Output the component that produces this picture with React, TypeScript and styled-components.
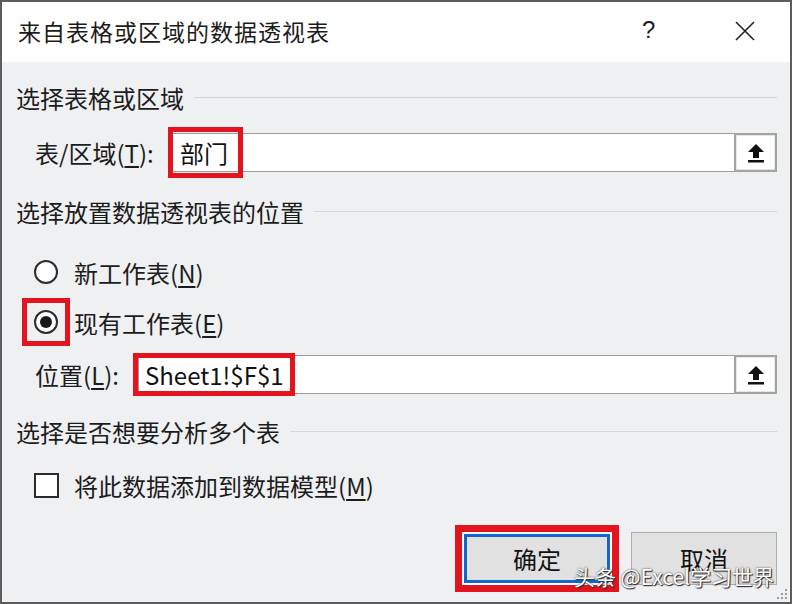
import styled, { createGlobalStyle } from "styled-components";

const GlobalStyle = createGlobalStyle`
  html, body {
    margin: 0;
    padding: 0;
    width: 792px;
    height: 604px;
    overflow: hidden;
    background: #eff0f2;
  }
  * {
    box-sizing: border-box;
  }
`

const Window = styled.div`
  position: relative;
  width: 792px;
  height: 604px;
  border: 2px solid #5c5c5c;
  background: #eff0f2;
  font-family: "Noto Sans CJK SC", "Microsoft YaHei", sans-serif;
  color: #1c1c1c;
  display: flex;
  flex-direction: column;
`

const TitleBar = styled.div`
  height: 60px;
  background: #ffffff;
  display: flex;
  align-items: center;
  padding: 0 0 0 16px;
`

const Title = styled.div`
  flex: 1;
  font-size: 23px;
  letter-spacing: 1px;
  margin-top: -2px;
`

const HelpMark = styled.div`
  width: 20px;
  font-family: "Liberation Sans", sans-serif;
  font-size: 24px;
  margin-right: 72px;
  margin-top: -4px;
`

const CloseButton = styled.div`
  width: 22px;
  height: 22px;
  margin-right: 34px;
  margin-top: -2px;
`

const Body = styled.div`
  flex: 1;
  display: flex;
  flex-direction: column;
  padding: 0 13px 0 14px;
`

const GroupHeader = styled.div<{ $top: number }>`
  margin-top: ${p => p.$top}px;
  height: 30px;
  display: flex;
  align-items: center;
  gap: 10px;
  font-size: 24px;

  &::after {
    content: "";
    flex: 1;
    height: 1px;
    background: #d4d5d8;
    margin-top: 1px;
  }
`

const FieldRow = styled.div<{ $top: number }>`
  margin-top: ${p => p.$top}px;
  display: flex;
  align-items: center;
  height: 39px;
  padding-left: 19px;
`

const FieldLabel = styled.div<{ $width: number }>`
  width: ${p => p.$width}px;
  font-size: 24px;
  flex-shrink: 0;
`

const Field = styled.div`
  flex: 1;
  height: 39px;
  display: flex;
  align-items: center;
  background: #ffffff;
  border: 1px solid #9d9d9d;
  border-right: none;
`

const Highlight = styled.div<{ $height: number; $left: number; $padding: number }>`
  height: ${p => p.$height}px;
  margin-left: ${p => p.$left}px;
  padding: 0 ${p => p.$padding}px 0 7px;
  border: 5px solid #e3141d;
  display: flex;
  align-items: center;
  flex-shrink: 0;
  font-size: 24px;
  color: #111;
`

const RefButton = styled.div`
  width: 43px;
  height: 39px;
  border: 2px solid #a3a3a3;
  background: #ffffff;
  box-shadow: inset 0 0 0 1px #e6e6e6;
  display: flex;
  align-items: center;
  justify-content: center;
  flex-shrink: 0;
`

const OptionRow = styled.div<{ $top: number }>`
  margin-top: ${p => p.$top}px;
  height: 30px;
  display: flex;
  align-items: center;
  padding-left: 18px;
  font-size: 24px;
`

const RadioFrame = styled.div<{ $marked?: boolean }>`
  display: flex;
  align-items: center;
  justify-content: center;
  margin-right: 16px;
  ${p => p.$marked && `
    border: 5px solid #e3141d;
    padding: 7px;
    margin: -12px 4px -12px -12px;
  `}
`

const Radio = styled.div<{ $checked?: boolean }>`
  width: 24px;
  height: 24px;
  border-radius: 50%;
  border: 2px solid #2b2b2b;
  background: #ffffff;
  display: flex;
  align-items: center;
  justify-content: center;

  &::after {
    content: "";
    display: ${p => (p.$checked ? "block" : "none")};
    width: 12px;
    height: 12px;
    border-radius: 50%;
    background: #1a1a1a;
  }
`

const Checkbox = styled.div`
  width: 25px;
  height: 25px;
  border: 2px solid #2b2b2b;
  background: #ffffff;
  margin-right: 15px;
`

const ButtonBar = styled.div`
  margin-top: auto;
  margin-bottom: 10px;
  display: flex;
  justify-content: flex-end;
  align-items: center;
  gap: 12px;
`

const DefaultFrame = styled.div`
  border: 7px solid #e3141d;
  padding: 2px;
  background: #ffffff;
`

const DialogButton = styled.div<{ $primary?: boolean }>`
  width: 146px;
  height: ${p => (p.$primary ? 49 : 53)}px;
  background: #e1e1e1;
  border: ${p => (p.$primary ? "3px solid #1067d4" : "1px solid #adadad")};
  display: flex;
  align-items: center;
  justify-content: center;
  font-size: 24px;
  color: #111;
`

const Watermark = styled.div`
  position: absolute;
  right: 16px;
  bottom: 11px;
  font-family: "Noto Sans CJK SC", sans-serif;
  font-size: 21px;
  color: #ffffff;
  text-shadow: 0 0 2px #333, 1px 1px 1px #222;
  white-space: nowrap;
`

const Grip = styled.svg`
  position: absolute;
  right: 2px;
  bottom: 2px;
`

const U = styled.span`
  text-decoration: underline;
  text-underline-offset: 3px;
`

const UploadIcon = () => (
  <svg width="18" height="20" viewBox="0 0 18 20">
    <path d="M9 1 L17 9 H12 V15 H6 V9 H1 Z" fill="#111" />
    <rect x="1" y="17" width="16" height="2.5" fill="#111" />
  </svg>
)

export default function App() {
  return (
    <>
      <GlobalStyle />
      <Window>
        <TitleBar>
          <Title>来自表格或区域的数据透视表</Title>
          <HelpMark>?</HelpMark>
          <CloseButton>
            <svg width="22" height="22" viewBox="0 0 22 22">
              <path d="M2 2 L20 20 M20 2 L2 20" stroke="#222" strokeWidth="1.6" />
            </svg>
          </CloseButton>
        </TitleBar>
        <Body>
          <GroupHeader $top={20}>选择表格或区域</GroupHeader>
          <FieldRow $top={21}>
            <FieldLabel $width={135}>表/区域(<U>T</U>):</FieldLabel>
            <Field>
              <Highlight $height={51} $left={-3} $padding={10}>部门</Highlight>
            </Field>
            <RefButton><UploadIcon /></RefButton>
          </FieldRow>

          <GroupHeader $top={24}>选择放置数据透视表的位置</GroupHeader>
          <OptionRow $top={31}>
            <RadioFrame><Radio /></RadioFrame>
            新工作表(<U>N</U>)
          </OptionRow>
          <OptionRow $top={20}>
            <RadioFrame $marked><Radio $checked /></RadioFrame>
            现有工作表(<U>E</U>)
          </OptionRow>
          <FieldRow $top={18}>
            <FieldLabel $width={103}>位置(<U>L</U>):</FieldLabel>
            <Field>
              <Highlight $height={43} $left={-6} $padding={6}>Sheet1!$F$1</Highlight>
            </Field>
            <RefButton><UploadIcon /></RefButton>
          </FieldRow>

          <GroupHeader $top={22}>选择是否想要分析多个表</GroupHeader>
          <OptionRow $top={24}>
            <Checkbox />
            将此数据添加到数据模型(<U>M</U>)
          </OptionRow>

          <ButtonBar>
            <DefaultFrame>
              <DialogButton $primary>确定</DialogButton>
            </DefaultFrame>
            <DialogButton>取消</DialogButton>
          </ButtonBar>
        </Body>
        <Watermark>头条 @Excel学习世界</Watermark>
        <Grip width="14" height="14" viewBox="0 0 14 14">
          {[[11, 3], [7, 7], [11, 7], [3, 11], [7, 11], [11, 11]].map(([x, y]) => (
            <rect key={`${x}-${y}`} x={x} y={y} width="2" height="2" fill="#9a9a9a" />
          ))}
        </Grip>
      </Window>
    </>
  )
}
